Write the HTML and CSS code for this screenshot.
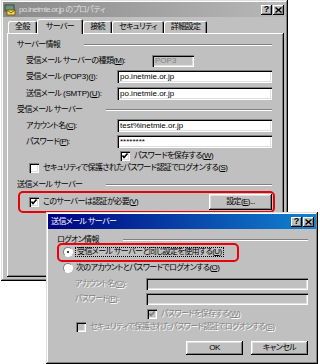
FILE: index.html
```html
<!DOCTYPE html>
<html lang="ja">
<head>
    <meta charset="UTF-8">
    <title>po.inetmie.or.jp のプロパティ</title>
    <link rel="stylesheet" href="styles.css">
</head>
<body>
<div class="desk">

    <!-- アカウントのプロパティ -->
    <div class="win win-props">
        <div class="titlebar inactive">
            <svg class="appicon" width="12" height="12" viewBox="0 0 12 12">
                <rect x="1" y="1" width="9" height="6" fill="#6f8f80" stroke="#2f4f40" stroke-width="1"/>
                <rect x="3" y="6" width="8" height="5" fill="#f0e070" stroke="#806000" stroke-width="1"/>
                <path d="M3 6 L7 9 L11 6" fill="none" stroke="#806000" stroke-width="1"/>
            </svg>
            <span class="title">po.inetmie.or.jp のプロパティ</span>
            <div class="caps">
                <span class="cap">?</span>
                <span class="cap"><svg width="7" height="6" viewBox="0 0 7 6"><path d="M0.5 0.5 L6.5 5.5 M6.5 0.5 L0.5 5.5" stroke="#000" stroke-width="1.4"/></svg></span>
            </div>
        </div>

        <div class="tabs">
            <span class="tab">全般</span>
            <span class="tab active">サーバー</span>
            <span class="tab">接続</span>
            <span class="tab">セキュリティ</span>
            <span class="tab">詳細設定</span>
        </div>

        <div class="panel">
            <div class="group first"><span>サーバー情報</span><i class="rule"></i></div>
            <div class="row mt3">
                <label class="wide">受信メール サーバーの種類(<u>M</u>):</label>
                <span class="field off short">POP3</span>
            </div>
            <div class="row mt3">
                <label>受信メール <span class="lat">(POP3)(<u>I</u>):</span></label>
                <span class="field">po.inetmie.or.jp</span>
            </div>
            <div class="row mt4">
                <label>送信メール <span class="lat">(SMTP)(<u>U</u>):</span></label>
                <span class="field">po.inetmie.or.jp</span>
            </div>

            <div class="group mt4"><span>受信メール サーバー</span><i class="rule"></i></div>
            <div class="row mt3">
                <label>アカウント名(<u>C</u>):</label>
                <span class="field">test%inetmie.or.jp</span>
            </div>
            <div class="row mt3">
                <label>パスワード(<u>P</u>):</label>
                <span class="field">********</span>
            </div>
            <div class="check mt2 save-pw">
                <span class="box on"></span>パスワードを保存する(<u>W</u>)
            </div>
            <div class="check secure">
                <span class="box"></span>セキュリティで保護されたパスワード認証でログオンする(<u>S</u>)
            </div>

            <div class="group mt5"><span>送信メール サーバー</span><i class="rule"></i></div>
            <div class="check auth">
                <span class="box on"></span>このサーバーは認証が必要(<u>V</u>)
                <span class="btn btn-set">設定(<u>E</u>)...</span>
            </div>
        </div>
    </div>

    <div class="mark mark-auth"></div>

    <!-- 送信メール サーバー -->
    <div class="win win-smtp">
        <div class="titlebar active">
            <span class="title">送信メール サーバー</span>
            <div class="caps">
                <span class="cap">?</span>
                <span class="cap"><svg width="7" height="6" viewBox="0 0 7 6"><path d="M0.5 0.5 L6.5 5.5 M6.5 0.5 L0.5 5.5" stroke="#000" stroke-width="1.4"/></svg></span>
            </div>
        </div>

        <div class="dlg-body">
            <div class="group"><span>ログオン情報</span><i class="rule"></i></div>
            <div class="radio">
                <span class="dot on"></span><span class="focus">受信メール サーバーと同じ設定を使用する(<u>U</u>)</span>
            </div>
            <div class="radio mt4">
                <span class="dot"></span>次のアカウントとパスワードでログオンする(<u>O</u>)
            </div>
            <div class="row dim mt4">
                <label>アカウント名(<u>O</u>):</label>
                <span class="field off"></span>
            </div>
            <div class="row dim mt3">
                <label>パスワード(<u>P</u>):</label>
                <span class="field off"></span>
            </div>
            <div class="check dim mt3 save-pw2">
                <span class="box on off"></span>パスワードを保存する(<u>W</u>)
            </div>
            <div class="check dim mt1 secure2">
                <span class="box off"></span>セキュリティで保護されたパスワード認証でログオンする(<u>S</u>)
            </div>
            <div class="actions">
                <span class="btn">OK</span>
                <span class="btn">キャンセル</span>
            </div>
        </div>
    </div>

    <div class="mark mark-same"></div>

</div>
</body>
</html>
```

FILE: styles.css
```css
* {
    margin: 0;
    padding: 0;
    box-sizing: border-box;
}

body {
    background: #fff;
    font-family: "Liberation Sans", "Noto Sans CJK JP", sans-serif;
    font-size: 8px;
    letter-spacing: -0.6px;
    line-height: 1;
    color: #000;
    font-feature-settings: "palt";
}

u {
    text-decoration-thickness: 1px;
    text-underline-offset: 1px;
}

.lat {
    letter-spacing: -0.2px;
}

.desk {
    position: relative;
    width: 320px;
    height: 364px;
    overflow: hidden;
}

/* ウィンドウ枠 */
.win {
    position: absolute;
    display: flex;
    flex-direction: column;
    padding: 2px;
    background: #c0c0c0;
    box-shadow:
        inset -1px -1px #000,
        inset 1px 1px #dfdfdf,
        inset -2px -2px #808080,
        inset 2px 2px #fff;
}

.win-props {
    left: 1px;
    top: 0;
    width: 287px;
    height: 281px;
}

.win-smtp {
    left: 46px;
    top: 212px;
    width: 272px;
    height: 152px;
}

.titlebar {
    height: 15px;
    display: flex;
    align-items: center;
    gap: 3px;
    padding: 0 2px 0 1px;
}

.titlebar.inactive {
    background: linear-gradient(90deg, #8a8a8a, #b8b8b8);
    color: #dedede;
}

.titlebar.active {
    background: linear-gradient(90deg, #000080, #1084d0);
    color: #fff;
    padding-left: 3px;
}

.title {
    flex: 1;
    white-space: nowrap;
}

.caps {
    display: flex;
    gap: 1px;
}

.cap {
    width: 11px;
    height: 10px;
    display: flex;
    align-items: center;
    justify-content: center;
    background: #c0c0c0;
    color: #000;
    font-weight: bold;
    font-size: 9px;
    letter-spacing: 0;
    box-shadow:
        inset -1px -1px #000,
        inset 1px 1px #fff,
        inset -2px -2px #808080;
}

/* タブ */
.tabs {
    display: flex;
    align-items: flex-end;
    height: 15px;
    margin: 1px 0 0 5px;
    position: relative;
    z-index: 1;
}

.tab {
    height: 12px;
    padding: 0 7px;
    display: flex;
    align-items: center;
    border-radius: 2px 2px 0 0;
    box-shadow:
        inset 1px 1px #fff,
        inset -1px 0 #000,
        inset -2px 0 #808080;
}

.tab.active {
    height: 15px;
    margin-bottom: -1px;
    padding: 0 9px;
    background: #c0c0c0;
}

.panel {
    flex: 1;
    display: flex;
    flex-direction: column;
    margin: 0 2px 2px 4px;
    padding: 5px 12px 0 10px;
    box-shadow:
        inset -1px -1px #000,
        inset 1px 1px #fff,
        inset -2px -2px #808080;
}

.dlg-body {
    flex: 1;
    display: flex;
    flex-direction: column;
    padding: 5px 8px 0 9px;
}

/* 見出しと区切り線 */
.group {
    display: flex;
    align-items: center;
    height: 12px;
}

.group.first {
    height: 13px;
}

.rule {
    flex: 1;
    height: 2px;
    margin-left: 24px;
    border-top: 1px solid #808080;
    border-bottom: 1px solid #fff;
}

.row {
    display: flex;
    align-items: center;
    height: 13px;
    padding-left: 9px;
}

.row label {
    width: 91px;
    flex: none;
    white-space: nowrap;
}

.row label.wide {
    width: 126px;
}

.dlg-body .row {
    height: 12px;
    padding-left: 18px;
}

.dlg-body .row label {
    width: 71px;
}

.field {
    flex: 1;
    height: 100%;
    display: flex;
    align-items: center;
    padding: 0 3px;
    background: #fff;
    white-space: nowrap;
    letter-spacing: 0;
    box-shadow:
        inset 1px 1px #808080,
        inset 2px 2px #000,
        inset -1px -1px #fff,
        inset -2px -2px #dfdfdf;
}

.field.off {
    background: #c0c0c0;
    color: #808080;
}

.field.short {
    flex: none;
    width: 42px;
    height: 12px;
}

.dim {
    color: #848484;
    text-shadow: 1px 1px #fff;
}

/* チェックボックスとラジオボタン */
.check,
.radio {
    display: flex;
    align-items: center;
    height: 12px;
    white-space: nowrap;
}

.box {
    width: 10px;
    height: 10px;
    margin-right: 4px;
    flex: none;
    background: #fff;
    box-shadow:
        inset 1px 1px #808080,
        inset 2px 2px #000,
        inset -1px -1px #fff,
        inset -2px -2px #dfdfdf;
}

.box.on {
    background:
        url("data:image/svg+xml,%3Csvg xmlns='http://www.w3.org/2000/svg' width='10' height='10'%3E%3Cpath d='M2.5 4.5 L4 6.5 L7.5 2.5' fill='none' stroke='%23000' stroke-width='1.6'/%3E%3C/svg%3E") center / 10px 10px no-repeat,
        #fff;
}

.box.off {
    background-color: #c0c0c0;
}

.box.on.off {
    background:
        url("data:image/svg+xml,%3Csvg xmlns='http://www.w3.org/2000/svg' width='10' height='10'%3E%3Cpath d='M2.5 4.5 L4 6.5 L7.5 2.5' fill='none' stroke='%23808080' stroke-width='1.6'/%3E%3C/svg%3E") center / 10px 10px no-repeat,
        #c0c0c0;
}

.save-pw {
    padding-left: 103px;
}

.secure {
    padding-left: 12px;
}

.auth {
    height: 16px;
    margin-top: 3px;
    padding-left: 12px;
}

.save-pw2 {
    padding-left: 90px;
}

.secure2 {
    padding-left: 19px;
}

.radio {
    padding-left: 6px;
}

.dot {
    width: 10px;
    height: 10px;
    margin-right: 3px;
    flex: none;
    border-radius: 50%;
    background: #fff;
    border: 1px solid;
    border-color: #808080 #fff #fff #808080;
    position: relative;
}

.dot.on::after {
    content: "";
    position: absolute;
    left: 3px;
    top: 3px;
    width: 2px;
    height: 2px;
    border-radius: 50%;
    background: #000;
}

.focus {
    outline: 1px dotted #000;
    outline-offset: 0;
    padding: 0 1px;
}

/* ボタン */
.btn {
    height: 16px;
    display: flex;
    align-items: center;
    justify-content: center;
    background: #c0c0c0;
    box-shadow:
        inset -1px -1px #000,
        inset 1px 1px #fff,
        inset -2px -2px #808080,
        inset 2px 2px #dfdfdf;
}

.btn-set {
    width: 63px;
    margin-left: auto;
}

.actions {
    display: flex;
    justify-content: flex-end;
    gap: 8px;
    margin-top: 8px;
}

.actions .btn {
    width: 57px;
    height: 14px;
}

.mt1 { margin-top: 1px; }
.mt2 { margin-top: 2px; }
.mt3 { margin-top: 3px; }
.mt4 { margin-top: 4px; }
.mt5 { margin-top: 5px; }

/* 赤い囲み */
.mark {
    position: absolute;
    border: 2px solid #e8000b;
    border-radius: 5px;
}

.mark-auth {
    left: 18px;
    top: 191px;
    width: 257px;
    height: 22px;
}

.mark-same {
    left: 57px;
    top: 243px;
    width: 182px;
    height: 19px;
}
```
